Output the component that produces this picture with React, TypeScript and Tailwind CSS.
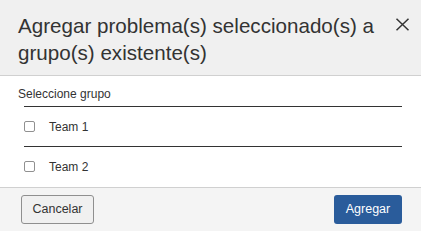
import React from "react";

export default function App() {
  return (
    <div
      className="w-[421px] h-[231px] bg-white flex flex-col overflow-hidden text-[#333333]"
      style={{ fontFamily: '"Liberation Sans", Arial, sans-serif' }}
    >
      <div className="h-[76px] bg-[#f0f0f0] border-b border-[#d0d0d0] flex items-start justify-between pl-[18px] pr-[11px] pt-[12px]">
        <h2 className="text-[20.6px] leading-[27px] font-normal text-[#333333] w-[370px]">
          Agregar problema(s) seleccionado(s) a grupo(s) existente(s)
        </h2>
        <button className="mt-[4px] w-[16px] h-[16px] flex items-center justify-center text-[#333333]">
          <svg width="15" height="13" viewBox="0 0 15 13" fill="none">
            <path d="M1.5 0.8 L13.5 12.2 M13.5 0.8 L1.5 12.2" stroke="#333333" strokeWidth="1.5" />
          </svg>
        </button>
      </div>
      <div className="flex-1 flex flex-col pt-[10px]">
        <div className="pl-[18px] text-[12px] leading-[16px] text-[#333333]">Seleccione grupo</div>
        <div className="mt-[4px] ml-[24px] mr-[19px] flex flex-col">
          {["Team 1", "Team 2"].map((t) => (
            <div key={t} className="border-t border-[#333333] h-[40px] flex items-center">
              <span className="w-[11px] h-[11px] border border-[#909090] rounded-[2px] bg-white shrink-0" />
              <span className="ml-[14px] text-[12px] leading-[16px] text-[#333333]">{t}</span>
            </div>
          ))}
        </div>
      </div>
      <div className="h-[44px] bg-[#f4f4f4] border-t border-[#d0d0d0] flex items-start justify-between pl-[21px] pr-[19px] pt-[7px]">
        <button className="h-[29px] w-[73px] border border-[#8f8f8f] rounded-[3px] bg-[#f0f0f0] text-[12.5px] text-[#333333]">
          Cancelar
        </button>
        <button className="h-[29px] w-[68px] rounded-[3px] bg-[#2a5c9b] text-[12.5px] text-white">
          Agregar
        </button>
      </div>
    </div>
  );
}
